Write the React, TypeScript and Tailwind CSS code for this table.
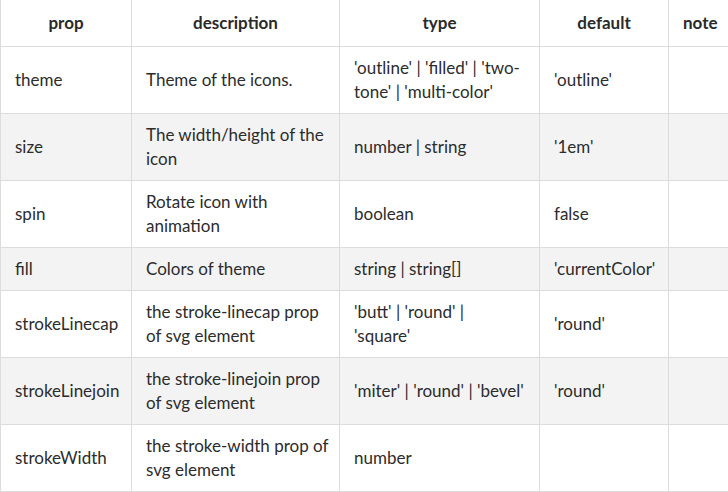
import React from 'react';

type Row = {
    prop: string;
    description: React.ReactNode;
    type: React.ReactNode;
    def: string;
};

const rows: Row[] = [
    {
        prop: 'theme',
        description: 'Theme of the icons.',
        type: (
            <>
                'outline' | 'filled' | 'two-
                <br />
                tone' | 'multi-color'
            </>
        ),
        def: "'outline'",
    },
    {
        prop: 'size',
        description: (
            <>
                The width/height of the
                <br />
                icon
            </>
        ),
        type: 'number | string',
        def: "'1em'",
    },
    {
        prop: 'spin',
        description: (
            <>
                Rotate icon with
                <br />
                animation
            </>
        ),
        type: 'boolean',
        def: 'false',
    },
    {
        prop: 'fill',
        description: 'Colors of theme',
        type: 'string | string[]',
        def: "'currentColor'",
    },
    {
        prop: 'strokeLinecap',
        description: (
            <>
                the stroke-linecap prop
                <br />
                of svg element
            </>
        ),
        type: (
            <>
                'butt' | 'round' |
                <br />
                'square'
            </>
        ),
        def: "'round'",
    },
    {
        prop: 'strokeLinejoin',
        description: (
            <>
                the stroke-linejoin prop
                <br />
                of svg element
            </>
        ),
        type: "'miter' | 'round' | 'bevel'",
        def: "'round'",
    },
    {
        prop: 'strokeWidth',
        description: (
            <>
                the stroke-width prop of
                <br />
                svg element
            </>
        ),
        type: 'number',
        def: '',
    },
];

const cell = 'border border-[#dcdcdc] px-[14px] py-[9px] align-middle whitespace-nowrap';

export default function App() {
    return (
        <div className="w-[728px] h-[492px] overflow-hidden bg-white font-['Lato',sans-serif] text-[17px] leading-6 text-[#2c2c2c]">
            <table className="table-fixed border-collapse w-[731px] -mt-px">
                <colgroup>
                    <col className="w-[131px]" />
                    <col className="w-[208px]" />
                    <col className="w-[200px]" />
                    <col className="w-[129px]" />
                    <col className="w-[63px]" />
                </colgroup>
                <thead>
                    <tr>
                        {['prop', 'description', 'type', 'default', 'note'].map((h) => (
                            <th key={h} className={`${cell} py-[11px] text-center font-bold text-[#2a2a2a]`}>
                                {h}
                            </th>
                        ))}
                    </tr>
                </thead>
                <tbody>
                    {rows.map((r, i) => (
                        <tr key={r.prop} className={i % 2 === 1 ? 'bg-[#f3f3f3]' : 'bg-white'}>
                            <td className={cell}>{r.prop}</td>
                            <td className={cell}>{r.description}</td>
                            <td className={cell}>{r.type}</td>
                            <td className={cell}>{r.def}</td>
                            <td className={cell}></td>
                        </tr>
                    ))}
                </tbody>
            </table>
        </div>
    );
}
